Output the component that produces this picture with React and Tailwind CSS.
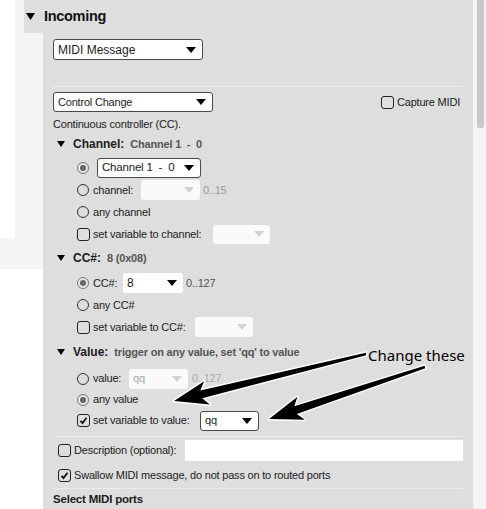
import React from 'react';

function Caret({ color = '#000', className = '' }) {
  return (
    <svg width="10" height="6" viewBox="0 0 10 6" className={className}>
      <polygon points="0,0 10,0 5,6" fill={color} />
    </svg>
  );
}

function Tri({ w = 8, h = 6 }) {
  return (
    <svg width={w} height={h} viewBox={`0 0 ${w} ${h}`} className="shrink-0">
      <polygon points={`0,0 ${w},0 ${w / 2},${h}`} fill="#000" />
    </svg>
  );
}

function Select({ className = '', text, disabled, bordered = true }) {
  return (
    <div
      className={`flex items-center justify-between rounded-[3px] shrink-0 ${
        disabled ? 'bg-[#fafafa]' : 'bg-white'
      } ${bordered ? 'border border-[#4a4a4a]' : ''} ${className}`}
    >
      <span className={`pl-[4px] whitespace-pre ${disabled ? 'text-[#a8a8a8]' : ''}`}>{text}</span>
      <Caret color={disabled ? '#d2d2d2' : '#000'} className="mr-[6px]" />
    </div>
  );
}

function Radio({ checked }) {
  if (checked) {
    return (
      <span className="w-[12px] h-[12px] rounded-full border border-[#777] flex items-center justify-center shrink-0 bg-[#e8e8e8]">
        <span className="w-[6px] h-[6px] rounded-full bg-[#666]" />
      </span>
    );
  }
  return <span className="w-[12px] h-[12px] rounded-full border border-[#333] shrink-0" />;
}

function Checkbox({ checked }) {
  return (
    <span className="w-[13px] h-[13px] rounded-[3px] border border-[#222] flex items-center justify-center shrink-0">
      {checked && (
        <svg width="9" height="9" viewBox="0 0 9 9">
          <path d="M1.5 4.8 L3.5 7 L7.5 1.8" fill="none" stroke="#111" strokeWidth="1.8" />
        </svg>
      )}
    </span>
  );
}

function Section({ title, value }) {
  return (
    <div className="h-[20px] flex items-center pl-[4px]">
      <Tri w={8} h={6} />
      <span className="ml-[8px] text-[12px] font-bold tracking-normal">{title}</span>
      <span className="ml-[6px] font-bold text-[#555] whitespace-pre">{value}</span>
    </div>
  );
}

function arrowPoints(sx, sy, tx, ty, w0, w1, hl, hw) {
  const dx = tx - sx;
  const dy = ty - sy;
  const L = Math.hypot(dx, dy);
  const ux = dx / L;
  const uy = dy / L;
  const nx = -uy;
  const ny = ux;
  const bx = tx - ux * hl;
  const by = ty - uy * hl;
  const kx = bx - ux * 6;
  const ky = by - uy * 6;
  const pts = [
    [sx + nx * w0, sy + ny * w0],
    [bx + nx * w1, by + ny * w1],
    [kx + nx * hw, ky + ny * hw],
    [tx, ty],
    [kx - nx * hw, ky - ny * hw],
    [bx - nx * w1, by - ny * w1],
    [sx - nx * w0, sy - ny * w0],
  ];
  return pts.map((p) => p.join(',')).join(' ');
}

export default function App() {
  return (
    <div className="w-[486px] h-[509px] overflow-hidden relative flex bg-[#f4f4f4] font-['Liberation_Sans',Arial,sans-serif] text-[11px] tracking-[-0.2px] text-[#1c1c1c]">
      {/* left gutter */}
      <div className="w-[24px] flex flex-col shrink-0">
        <div className="w-[15px] h-[238px] bg-white" />
        <div className="h-[31px]" />
        <div className="flex-1 bg-white" />
      </div>

      {/* panel */}
      <div className="w-[449px] flex flex-col shrink-0">
        <div className="h-[33px] bg-[#dedede] flex items-center pl-[2px]">
          <Tri w={9} h={7} />
          <span className="ml-[9px] text-[14.5px] font-bold tracking-[-0.3px] text-[#111]">Incoming</span>
        </div>

        <div className="flex flex-1">
          <div className="w-[19px] flex flex-col shrink-0">
            <div className="h-[236px]" />
            <div className="flex-1 bg-white" />
          </div>

          <div className="flex-1 bg-[#dedede] pl-[10px] pr-[10px] flex flex-col">
            <div className="h-[6px]" />
            <Select className="w-[150px] h-[21px] text-[12px] tracking-normal" text="MIDI Message" />
            <div className="h-[26px]" />
            <div className="h-px bg-[#ececec]" />

            <div className="mt-[5px] h-[20px] flex items-center justify-between">
              <Select className="w-[160px] h-[20px]" text="Control Change" />
              <div className="flex items-center gap-[3px] mr-[3px]">
                <Checkbox />
                <span>Capture MIDI</span>
              </div>
            </div>
            <div className="mt-[2px] h-[20px] flex items-center">Continuous controller (CC).</div>

            {/* Channel */}
            <Section title="Channel:" value={'Channel 1  -  0'} />
            <div className="mt-[3px] pl-[24px] flex flex-col">
              <div className="h-[22px] flex items-center">
                <Radio checked />
                <Select className="ml-[8px] w-[104px] h-[20px] text-[11.5px]" text={'Channel 1  -  0'} />
              </div>
              <div className="h-[22px] flex items-center">
                <Radio />
                <span className="ml-[4px] w-[48px]">channel:</span>
                <Select className="w-[59px] h-[20px]" text="" disabled bordered={false} />
                <span className="ml-[3px] text-[#999]">0..15</span>
              </div>
              <div className="h-[22px] flex items-center">
                <Radio />
                <span className="ml-[4px]">any channel</span>
              </div>
              <div className="h-[22px] flex items-center">
                <Checkbox />
                <span className="ml-[3px] w-[120px]">set variable to channel:</span>
                <Select className="w-[57px] h-[19px]" text="" disabled bordered={false} />
              </div>
            </div>

            {/* CC# */}
            <div className="mt-[3px]">
              <Section title="CC#:" value="8 (0x08)" />
            </div>
            <div className="mt-[4px] pl-[24px] flex flex-col">
              <div className="h-[22px] flex items-center">
                <Radio checked />
                <span className="ml-[4px] w-[30px]">CC#:</span>
                <Select className="w-[60px] h-[20px] text-[12px]" text="8" bordered={false} />
                <span className="ml-[3px] text-[#555]">0..127</span>
              </div>
              <div className="h-[22px] flex items-center">
                <Radio />
                <span className="ml-[4px]">any CC#</span>
              </div>
              <div className="h-[22px] flex items-center">
                <Checkbox />
                <span className="ml-[3px] w-[102px]">set variable to CC#:</span>
                <Select className="w-[58px] h-[20px]" text="" disabled bordered={false} />
              </div>
            </div>

            {/* Value */}
            <div className="mt-[4px]">
              <Section title="Value:" value="trigger on any value, set 'qq' to value" />
            </div>
            <div className="mt-[6px] pl-[24px] flex flex-col">
              <div className="h-[21px] flex items-center">
                <Radio />
                <span className="ml-[4px] w-[36px]">value:</span>
                <Select className="w-[59px] h-[20px]" text="qq" disabled bordered={false} />
                <span className="ml-[4px] text-[#aaa]">0..127</span>
              </div>
              <div className="h-[21px] flex items-center">
                <Radio checked />
                <span className="ml-[4px]">any value</span>
              </div>
              <div className="h-[21px] flex items-center">
                <Checkbox checked />
                <span className="ml-[3px] w-[107px]">set variable to value:</span>
                <Select className="w-[59px] h-[20px]" text="qq" />
              </div>
            </div>

            <div className="mt-[5px] h-px bg-[#ececec]" />
            <div className="mt-[3px] h-[21px] flex items-center pl-[5px]">
              <Checkbox />
              <span className="ml-[3px] w-[111px]">Description (optional):</span>
              <div className="flex-1 h-[21px] bg-white" />
            </div>
            <div className="mt-[4px] h-[20px] flex items-center pl-[5px]">
              <Checkbox checked />
              <span className="ml-[3px]">Swallow MIDI message, do not pass on to routed ports</span>
            </div>
            <div className="mt-[3px] h-px bg-[#ececec]" />
            <div className="mt-[2px] h-[18px] flex items-center text-[11.5px] font-bold">Select MIDI ports</div>
          </div>
        </div>
      </div>

      {/* scrollbar */}
      <div className="flex-1 pl-[4px]">
        <div className="w-[7px] h-[128px] bg-[#c9c9c9] rounded-b-[2px]" />
      </div>

      {/* annotation overlay */}
      <svg className="absolute left-0 top-0 pointer-events-none" width="486" height="509">
        <polygon
          points={arrowPoints(366, 354, 174, 401, 1.2, 4, 28, 12)}
          fill="#000"
          stroke="#fff"
          strokeWidth="3"
          strokeLinejoin="round"
          paintOrder="stroke"
        />
        <polygon
          points={arrowPoints(425, 367, 269, 419, 1.2, 4, 28, 12)}
          fill="#000"
          stroke="#fff"
          strokeWidth="3"
          strokeLinejoin="round"
          paintOrder="stroke"
        />
      </svg>
      <div className="absolute left-[368px] top-[345px] text-[15px] leading-[20px] tracking-normal font-['Noto_Sans',sans-serif] text-black">
        Change these
      </div>
    </div>
  );
}
